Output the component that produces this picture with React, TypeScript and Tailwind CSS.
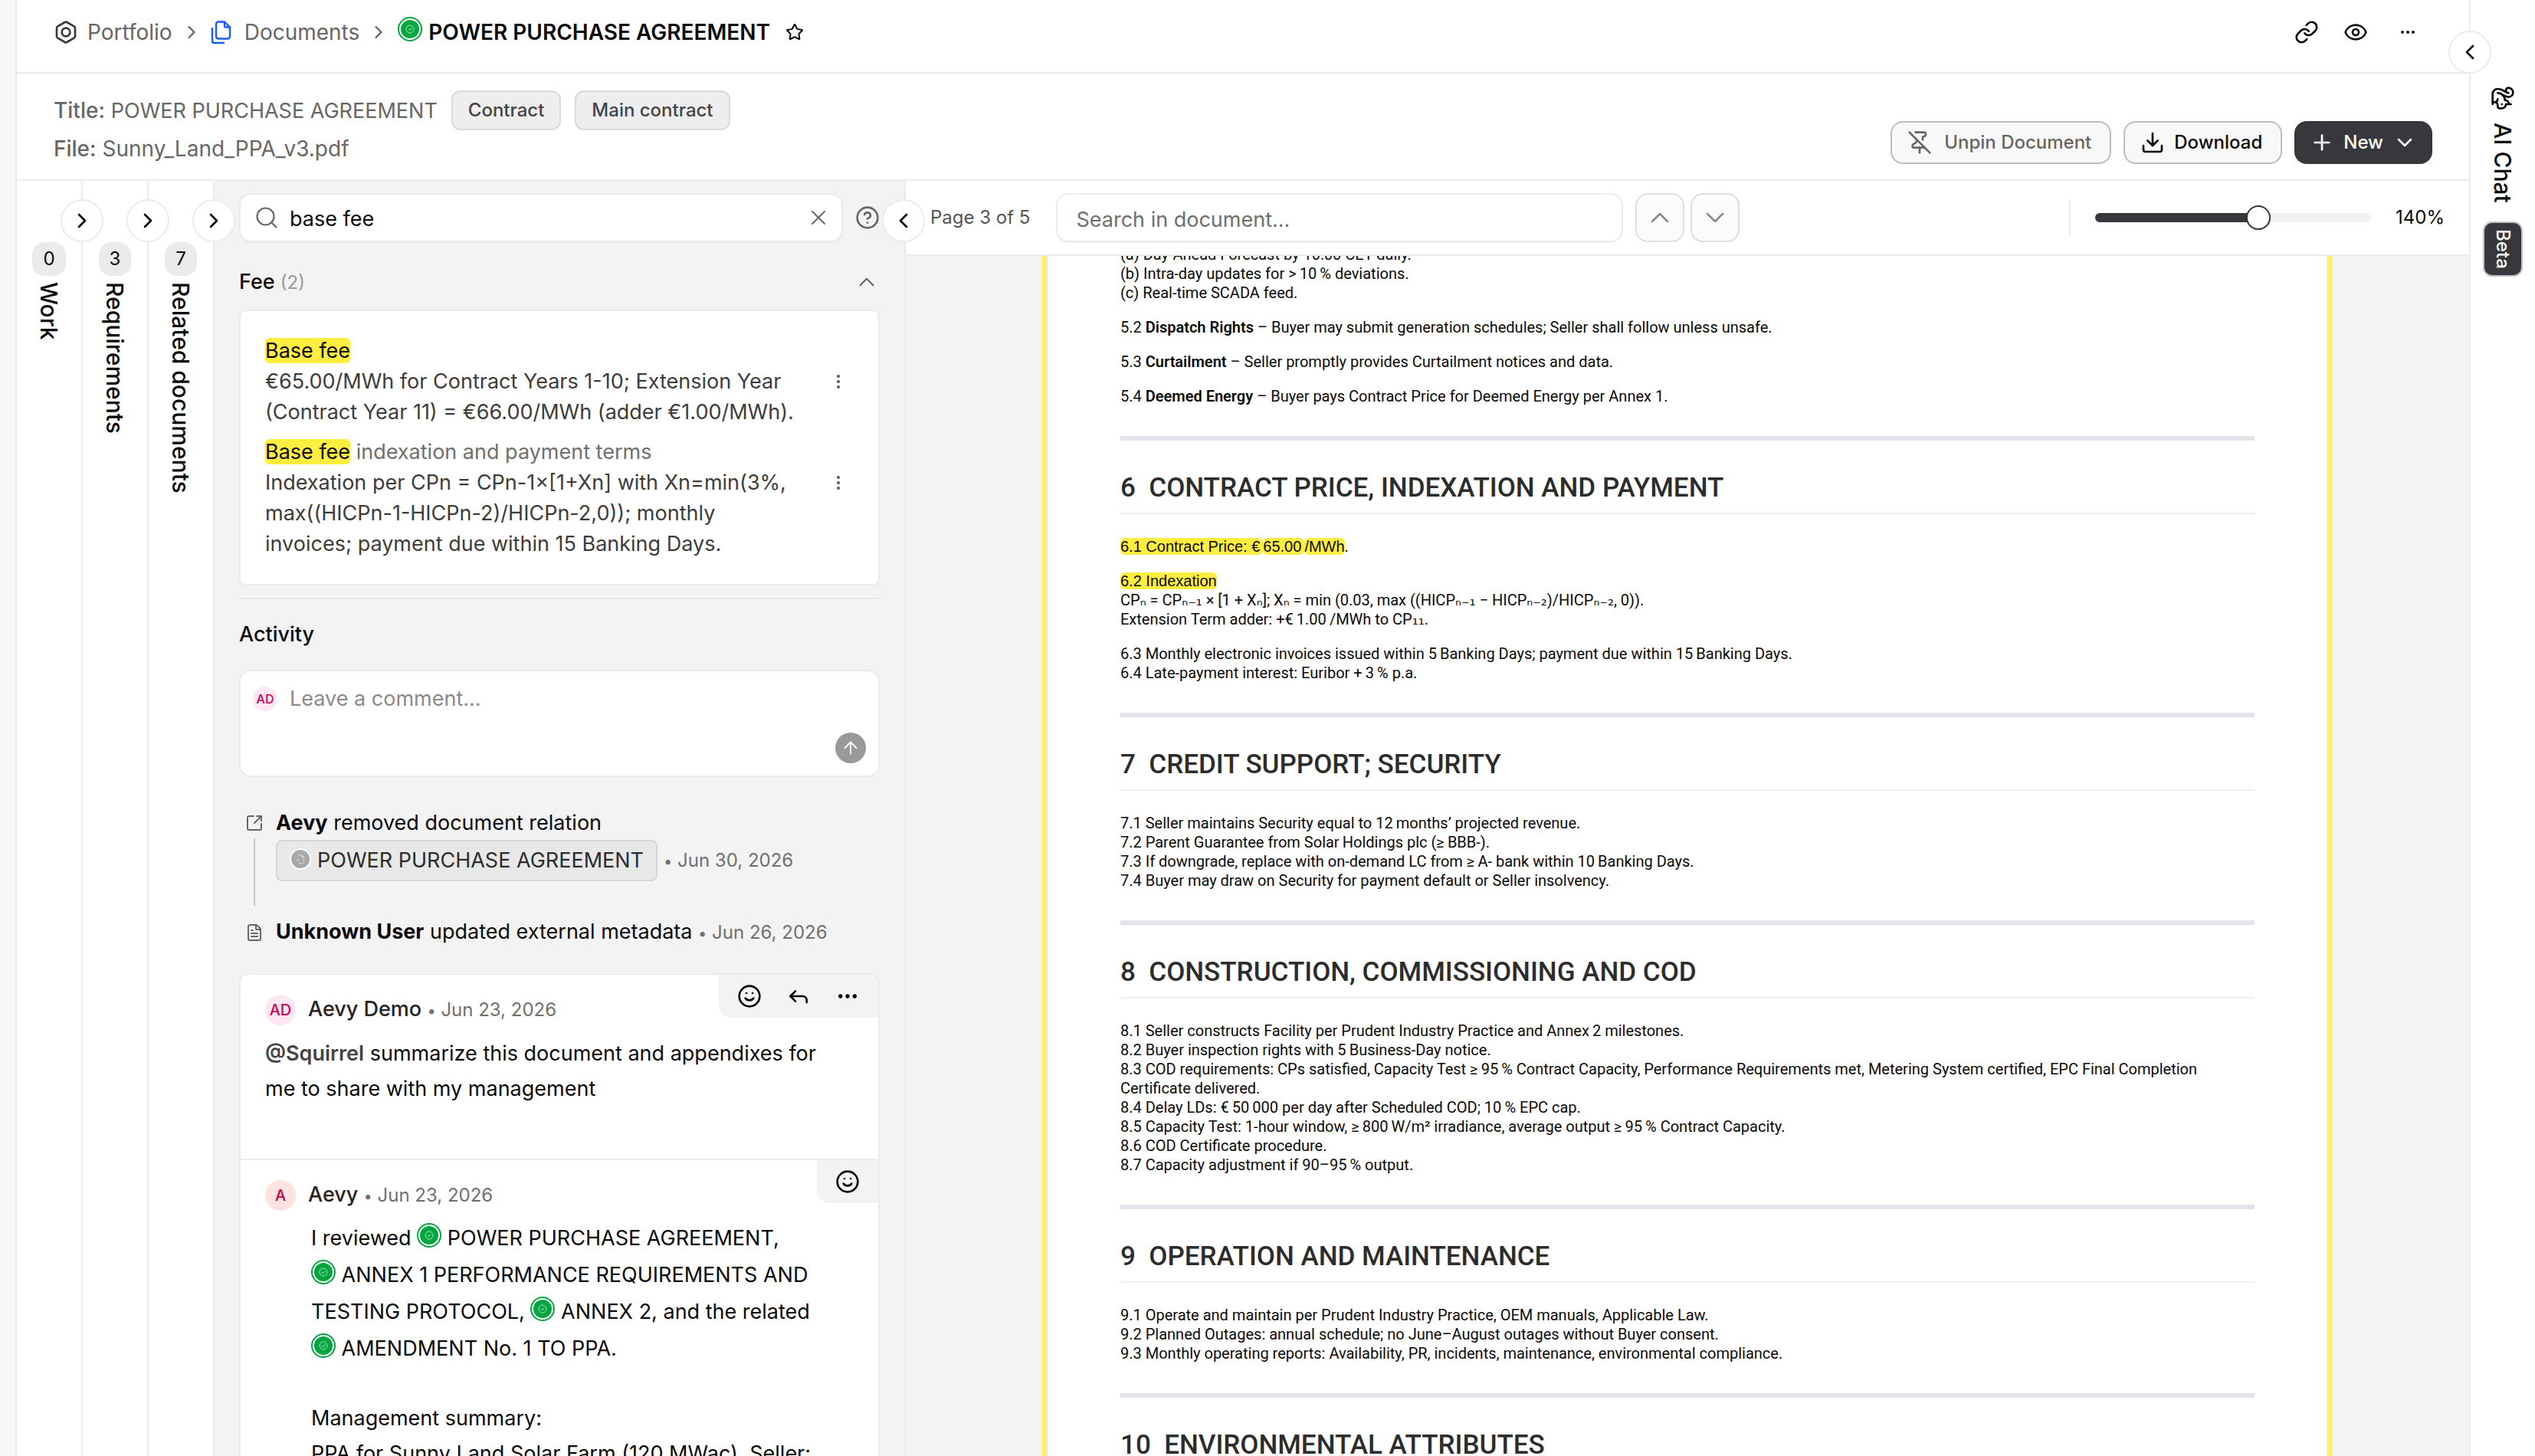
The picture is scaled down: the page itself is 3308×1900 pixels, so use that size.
import React from "react";
import {
  ArrowUp,
  Bolt,
  ChevronDown,
  ChevronLeft,
  ChevronRight,
  ChevronUp,
  CircleQuestionMark,
  Download,
  Ellipsis,
  EllipsisVertical,
  Eye,
  FileText,
  Link,
  PinOff,
  Plus,
  Reply,
  Smile,
  SquareArrowOutUpRight,
  Squirrel,
  Star,
  X,
} from "lucide-react";

const DocumentsIcon = () => (
  <svg width="28" height="32" viewBox="0 0 28 32" fill="none" stroke="#155dfc" strokeWidth="2.4" strokeLinecap="round" strokeLinejoin="round">
    <path d="M18 2.500H10a3 3 0 0 0-3 3v16a3 3 0 0 0 3 3h12a3 3 0 0 0 3-3V9.500l-7-7Z" />
    <path d="M18 3v4.500a2 2 0 0 0 2 2h4.500" />
    <path d="M2 11v16.500a2.500 2.500 0 0 0 2.500 2.500H17" />
  </svg>
);

const SearchIcon = () => (
  <svg width="32" height="32" viewBox="0 0 32 32" fill="none" stroke="#666" strokeWidth="2.2" strokeLinecap="round">
    <circle cx="14.500" cy="14.500" r="11" />
    <path d="m22.800 22.800 5.700 5.700" />
  </svg>
);

const ApprovedBadge = ({ className = "" }: { className?: string }) => (
  <svg width="32" height="32" viewBox="0 0 32 32" fill="none" className={`inline-block shrink-0 ${className}`}>
    <circle cx="16" cy="16" r="15" fill="#fff" stroke="#00a63e" strokeWidth="2" />
    <circle cx="16" cy="16" r="12" fill="#00a63e" />
    <circle cx="16" cy="16" r="5" stroke="#b9e6c9" strokeWidth="0.900" />
    <path d="m14 16.200 1.400 1.400 2.700-2.900" stroke="#e6f7ec" strokeWidth="1" />
  </svg>
);

const RemovedBadge = () => (
  <svg width="28" height="28" viewBox="0 0 28 28" fill="none" className="mb-1 shrink-0">
    <circle cx="14" cy="14" r="13" fill="#a8a8a8" stroke="#fff" strokeWidth="2" />
    <g stroke="#dcdcdc" strokeWidth="0.900">
      <path d="M10.500 11.500V9.500a1 1 0 0 1 1-1h4l3 3v7a1 1 0 0 1-1 1h-6" />
      <path d="M15.500 8.500v3h3M9.500 14l3 3M12.500 14l-3 3" />
    </g>
  </svg>
);

const CircleButton = ({ label, children, className = "" }: { label: string; children: React.ReactNode; className?: string }) => (
  <button
    aria-label={label}
    className={`absolute z-10 flex h-14 w-14 items-center justify-center rounded-full border-2 border-[#ebebeb] bg-white ${className}`}
  >
    {children}
  </button>
);

const DateStamp = ({ children }: { children: React.ReactNode }) => (
  <span className="text-[24px] font-normal text-[#707070]">
    <span className="text-[20px]">•</span> {children}
  </span>
);

const rails = [
  { count: 0, label: "Work" },
  { count: 3, label: "Requirements" },
  { count: 7, label: "Related documents" },
];

const Header = () => (
  <header>
    <div className="flex h-24 items-start justify-between border-b-2 border-[#ebebeb] pt-5 pr-[68px] pl-12">
      <nav className="flex h-11 items-center text-[28px] text-[#666]">
        <a href="#portfolio" className="flex items-center gap-3">
          <Bolt size={32} className="text-[#37373c]" />
          Portfolio
        </a>
        <ChevronRight size={28} className="mx-[11px]" />
        <a href="#documents" className="flex items-center gap-4">
          <DocumentsIcon />
          Documents
        </a>
        <ChevronRight size={28} className="mx-[11px]" />
        <h1 className="flex items-center gap-2 font-semibold text-[#0a0a0a]">
          <ApprovedBadge className="mb-2" />
          POWER PURCHASE AGREEMENT
        </h1>
        <button aria-label="Favourite" className="ml-5 text-[#0a0a0a]">
          <Star size={24} />
        </button>
      </nav>
      <div className="flex h-11 items-center gap-8 text-[#0a0a0a]">
        <button aria-label="Copy link">
          <Link size={32} />
        </button>
        <button aria-label="Watch">
          <Eye size={32} />
        </button>
        <button aria-label="More" className="pl-2">
          <Ellipsis size={24} />
        </button>
      </div>
    </div>
    <div className="flex items-center justify-between border-b-2 border-[#ebebeb] px-12 pt-5 pb-[18px]">
      <div className="text-[28px] text-[#666]">
        <div className="flex h-14 items-center gap-[18px]">
          <p>
            <span className="font-medium">Title:</span> <span className="text-[27px]">POWER PURCHASE AGREEMENT</span>
          </p>
          <span className="flex h-[52px] items-center rounded-xl border-2 border-[#dadada] bg-[#eee] px-5 text-[24px] font-medium text-[#444]">
            Contract
          </span>
          <span className="flex h-[52px] items-center rounded-xl border-2 border-[#dadada] bg-[#eee] px-5 text-[24px] font-medium text-[#444]">
            Main contract
          </span>
        </div>
        <p className="h-11 leading-[44px]">
          <span className="font-medium">File:</span> Sunny_Land_PPA_v3.pdf
        </p>
      </div>
      <div className="flex gap-4 self-end pb-[2px] text-[24px] font-medium">
        <button className="flex h-14 items-center gap-4 rounded-2xl border-2 border-[#bdbdbd] bg-[#f8f8f8] pr-6 pl-5 text-[#666]">
          <PinOff size={32} />
          Unpin Document
        </button>
        <button className="flex h-14 items-center gap-3 rounded-2xl border-2 border-[#bdbdbd] bg-[#f8f8f8] pr-6 pl-5 text-[#0a0a0a]">
          <Download size={32} />
          Download
        </button>
        <button className="flex h-14 items-center gap-3 rounded-2xl bg-[#37373c] px-5 text-white">
          <Plus size={32} />
          New
          <ChevronDown size={32} />
        </button>
      </div>
    </div>
  </header>
);

const Rail = ({ count, label }: { count: number; label: string }) => (
  <div className="relative flex w-[86px] shrink-0 flex-col items-center border-r-2 border-[#ebebeb] pt-20">
    <CircleButton label={`Open ${label}`} className="top-6 -right-[29px]">
      <ChevronRight size={32} />
    </CircleButton>
    <span className="flex h-11 items-center rounded-2xl bg-[#ebebeb] px-3.5 text-[24px]">{count}</span>
    <span className="mt-2 text-[30px] leading-10 font-medium [writing-mode:vertical-rl]">{label}</span>
  </div>
);

const Mark = ({ children }: { children: React.ReactNode }) => (
  <mark className="rounded-md bg-[#ffee3f] text-[#0a0a0a]">{children}</mark>
);

const FeeItem = ({ title, children }: { title: React.ReactNode; children: React.ReactNode }) => (
  <div className="flex items-start justify-between">
    <div className="w-[700px]">
      <p className="text-[#6f6f6f]">{title}</p>
      <p className="text-[#3c3c3c]">{children}</p>
    </div>
    <button aria-label="Options" className="mt-10 mr-2 flex h-10 items-center text-[#555]">
      <EllipsisVertical size={24} />
    </button>
  </div>
);

const Comment = ({
  initials,
  avatar,
  name,
  actions,
  children,
}: {
  initials: string;
  avatar: string;
  name: string;
  actions: React.ReactNode;
  children: React.ReactNode;
}) => (
  <article className="relative px-8 pt-6 pb-[68px]">
    <div className="absolute top-0 right-0 flex h-14 items-center gap-8 rounded-bl-2xl bg-[#f3f3f3] px-6">{actions}</div>
    <div className="flex items-center gap-4">
      <span className={`flex h-10 w-10 items-center justify-center rounded-full text-[20px] font-medium ${avatar}`}>{initials}</span>
      <p className="leading-[42px] font-medium text-[#222]">
        {name} <DateStamp>Jun 23, 2026</DateStamp>
      </p>
    </div>
    {children}
  </article>
);

const Panel = () => (
  <aside className="relative flex w-[902px] shrink-0 flex-col border-r-2 border-[#ebebeb] bg-[#f3f3f3] px-8 pt-4 text-[27px]">
    <CircleButton label="Collapse panel" className="top-6 -right-[27px]">
      <ChevronLeft size={32} />
    </CircleButton>
    <div className="flex items-center gap-4">
      <label className="flex h-16 flex-1 items-center gap-3.5 rounded-2xl border-2 border-[#ebebeb] bg-white pr-3.5 pl-[18px] shadow-xs">
        <SearchIcon />
        <input aria-label="Search attributes" defaultValue="base fee" className="min-w-0 flex-1 pt-1 outline-none" />
        <button aria-label="Clear" className="text-[#666]">
          <X size={32} strokeWidth={1.500} />
        </button>
      </label>
      <button aria-label="Help" className="text-[#666]">
        <CircleQuestionMark size={32} />
      </button>
    </div>

    <div className="mt-8 flex h-10 items-center justify-between">
      <h2 className="font-medium">
        Fee <span className="text-[24px] font-normal text-[#999]">(2)</span>
      </h2>
      <button aria-label="Collapse" className="text-[#666]">
        <ChevronUp size={34} strokeWidth={1.500} />
      </button>
    </div>
    <section className="mt-4 flex flex-col gap-3 rounded-lg border-2 border-[#ebebeb] bg-white p-8 leading-10">
      <FeeItem title={<Mark>Base fee</Mark>}>
        €65.00/MWh for Contract Years 1-10; Extension Year (Contract Year 11) = €66.00/MWh (adder €1.00/MWh).
      </FeeItem>
      <FeeItem
        title={
          <>
            <Mark>Base fee</Mark> indexation and payment terms
          </>
        }
      >
        Indexation per CPn = CPn-1×[1+Xn] with Xn=min(3%, max((HICPn-1-HICPn-2)/HICPn-2,0)); monthly invoices; payment due within 15
        Banking Days.
      </FeeItem>
    </section>

    <h2 className="mt-4 border-t-2 border-[#e8e8e8] pt-6 leading-[44px] font-medium">Activity</h2>
    <form className="mt-6 flex h-[140px] items-start gap-4 rounded-2xl border-2 border-[#ebebeb] bg-white p-4">
      <span className="mt-1 flex h-8 w-8 items-center justify-center rounded-full bg-[#fce7f3] text-[16px] font-medium text-[#c6005c]">
        AD
      </span>
      <textarea aria-label="Comment" placeholder="Leave a comment..." className="h-10 flex-1 resize-none leading-10 outline-none placeholder:text-[#8a8a8a]" />
      <button type="button" aria-label="Send" className="flex h-10 w-10 items-center justify-center self-end rounded-full bg-[#99999b] text-white">
        <ArrowUp size={26} strokeWidth={1.800} />
      </button>
    </form>

    <div className="mt-10 flex gap-2 px-2">
      <div className="flex w-6 flex-col items-center pt-2 text-[#666]">
        <SquareArrowOutUpRight size={24} />
        <span className="mt-2 w-[2px] flex-1 bg-[#c6c6c6]" />
      </div>
      <div className="pb-8 pl-2">
        <p className="leading-10">
          <b>Aevy</b> removed document relation
        </p>
        <div className="mt-[2px] flex items-center gap-2">
          <span className="flex h-[54px] items-center gap-2 rounded-lg border-2 border-[#d6d6d6] bg-[#e8e8e8] px-4 text-[#2c2c2c]">
            <RemovedBadge />
            POWER PURCHASE AGREEMENT
          </span>
          <DateStamp>Jun 30, 2026</DateStamp>
        </div>
      </div>
    </div>
    <div className="mt-3.5 flex items-center gap-4 px-2">
      <FileText size={24} className="text-[#666]" />
      <p className="leading-10">
        <b>Unknown User</b> updated external metadata <DateStamp>Jun 26, 2026</DateStamp>
      </p>
    </div>

    <section className="mt-8 min-h-0 flex-1 overflow-hidden rounded-t-xl border-2 border-b-0 border-[#ebebeb] bg-white">
      <Comment
        initials="AD"
        avatar="bg-[#fce7f3] text-[#c6005c]"
        name="Aevy Demo"
        actions={
          <>
            <button aria-label="React">
              <Smile size={32} />
            </button>
            <button aria-label="Reply">
              <Reply size={32} />
            </button>
            <button aria-label="More">
              <Ellipsis size={32} />
            </button>
          </>
        }
      >
        <p className="mt-3 pr-6 leading-[46px]">
          <span className="font-semibold text-[#444]">@Squirrel</span> summarize this document and appendixes for me to share with my
          management
        </p>
      </Comment>
      <div className="border-t-2 border-[#ebebeb]">
        <Comment
          initials="A"
          avatar="bg-[#ffe2e2] text-[#c70036]"
          name="Aevy"
          actions={
            <button aria-label="React">
              <Smile size={32} />
            </button>
          }
        >
          <p className="mt-2.5 pl-[60px] leading-[48px]">
            I reviewed <ApprovedBadge className="-mt-3" /> POWER PURCHASE AGREEMENT,
            <br />
            <ApprovedBadge className="-mt-3" /> ANNEX 1 PERFORMANCE REQUIREMENTS AND TESTING PROTOCOL,{" "}
            <ApprovedBadge className="-mt-3" /> ANNEX 2, and the related
            <br />
            <ApprovedBadge className="-mt-3" /> AMENDMENT No. 1 TO PPA.
          </p>
          <p className="mt-11 pl-[60px] leading-[46px]">
            Management summary:
            <br />
            PPA for Sunny Land Solar Farm (120 MWac). Seller:
          </p>
        </Comment>
      </div>
    </section>
  </aside>
);

const ViewerToolbar = () => (
  <div className="flex h-[98px] shrink-0 items-center border-b-2 border-[#ebebeb] bg-white px-8 text-[24px]">
    <span className="text-[#555]">Page 3 of 5</span>
    <input
      aria-label="Search in document"
      placeholder="Search in document..."
      className="ml-[34px] h-16 w-[740px] rounded-2xl border-2 border-[#ebebeb] px-6 pt-1 text-[27px] shadow-xs outline-none placeholder:text-[#6f6f6f]"
    />
    <button aria-label="Previous match" className="ml-4 flex h-16 w-16 items-center justify-center rounded-2xl border-2 border-[#dedede] bg-[#fbfbfb] text-[#888]">
      <ChevronUp size={40} strokeWidth={1.500} />
    </button>
    <button aria-label="Next match" className="ml-2 flex h-16 w-16 items-center justify-center rounded-2xl border-2 border-[#dedede] bg-[#fbfbfb] text-[#888]">
      <ChevronDown size={40} strokeWidth={1.500} />
    </button>
    <div className="ml-auto flex h-12 items-center gap-8 border-l-2 border-[#ebebeb] pl-8">
      <input
        type="range"
        aria-label="Zoom"
        min={50}
        max={200}
        defaultValue={140}
        className="h-3 w-[360px] appearance-none rounded-full bg-[linear-gradient(to_right,#37373c_60%,#f2f2f2_60%)] [&::-webkit-slider-thumb]:h-8 [&::-webkit-slider-thumb]:w-8 [&::-webkit-slider-thumb]:appearance-none [&::-webkit-slider-thumb]:rounded-full [&::-webkit-slider-thumb]:border-2 [&::-webkit-slider-thumb]:border-[#37373c] [&::-webkit-slider-thumb]:bg-white [&::-webkit-slider-thumb]:shadow-sm"
      />
      <span>140%</span>
    </div>
  </div>
);

const Hit = ({ children }: { children: React.ReactNode }) => (
  <mark className="rounded-md bg-[#ffee3f] font-['Liberation_Sans',sans-serif] text-[#0a0a0a]">{children}</mark>
);

const Sub = ({ children }: { children: React.ReactNode }) => (
  <span className="font-['DejaVu_Sans',sans-serif] leading-none">{children}</span>
);

const Clause = ({ title, children }: { title: string; children: React.ReactNode }) => (
  <section className="border-t-6 border-[#e1e4e8] pt-[42px]">
    <h2 className="border-b-2 border-[#eee] pb-3 text-[35px] leading-10 font-medium whitespace-pre text-[#2c2c2c]">{title}</h2>
    <div className="flex flex-col gap-5 pt-[30px] pb-[39px]">{children}</div>
  </section>
);

const Lines = ({ items }: { items: string[] }) => (
  <div>
    {items.map((item) => (
      <p key={item}>{item}</p>
    ))}
  </div>
);

const Page = () => (
  <div className="mx-auto w-[1684px] border-x-6 border-[#fff15f] font-[Roboto,sans-serif] text-[20px] leading-[25px] text-[#0a0a0a]">
    <div className="border-x-2 border-[#ebebeb] bg-white px-[94px]">
      <div className="-mt-3.5 flex flex-col gap-5 pb-[39px]">
        <Lines
          items={[
            "(a) Day-Ahead Forecast by 10:00 CET daily.",
            "(b) Intra-day updates for >\u200910\u2009% deviations.",
            "(c) Real-time SCADA feed.",
          ]}
        />
        <p>
          5.2 <b className="font-semibold">Dispatch Rights</b> – Buyer may submit generation schedules; Seller shall follow unless unsafe.
        </p>
        <p>
          5.3 <b className="font-semibold">Curtailment</b> – Seller promptly provides Curtailment notices and data.
        </p>
        <p>
          5.4 <b className="font-semibold">Deemed Energy</b> – Buyer pays Contract Price for Deemed Energy per Annex 1.
        </p>
      </div>
      <Clause title="6  CONTRACT PRICE, INDEXATION AND PAYMENT">
        <p>
          <Hit>6.1 Contract Price: €&#8201;</Hit>
          <Hit>65.00&#8201;</Hit>
          <Hit>/MWh</Hit>.
        </p>
        <div>
          <p>
            <Hit>6.2 Indexation</Hit>
          </p>
          <p>
            CP<Sub>ₙ</Sub> = CP<Sub>ₙ₋₁</Sub> × [1 + X<Sub>ₙ</Sub>]; X<Sub>ₙ</Sub> = min (0.03, max ((HICP<Sub>ₙ₋₁</Sub> − HICP
            <Sub>ₙ₋₂</Sub>)/HICP<Sub>ₙ₋₂</Sub>, 0)).
          </p>
          <p>
            Extension Term adder: +€&#8201;1.00&#8201;/MWh to CP<Sub>₁₁</Sub>.
          </p>
        </div>
        <Lines
          items={[
            "6.3 Monthly electronic invoices issued within 5\u2009Banking Days; payment due within 15\u2009Banking Days.",
            "6.4 Late-payment interest: Euribor +\u20093\u2009% p.a.",
          ]}
        />
      </Clause>
      <Clause title="7  CREDIT SUPPORT; SECURITY">
        <Lines
          items={[
            "7.1 Seller maintains Security equal to 12\u2009months’ projected revenue.",
            "7.2 Parent Guarantee from Solar\u2009Holdings plc (≥\u2009BBB-).",
            "7.3 If downgrade, replace with on-demand LC from ≥\u2009A- bank within 10\u2009Banking Days.",
            "7.4 Buyer may draw on Security for payment default or Seller insolvency.",
          ]}
        />
      </Clause>
      <Clause title="8  CONSTRUCTION, COMMISSIONING AND COD">
        <Lines
          items={[
            "8.1 Seller constructs Facility per Prudent Industry Practice and Annex\u20092 milestones.",
            "8.2 Buyer inspection rights with 5\u2009Business-Day notice.",
            "8.3 COD requirements: CPs satisfied, Capacity Test ≥\u200995\u2009% Contract Capacity, Performance Requirements met, Metering System certified, EPC Final Completion Certificate delivered.",
            "8.4 Delay LDs: €\u200950\u2009000 per day after Scheduled COD; 10\u2009% EPC cap.",
            "8.5 Capacity Test: 1-hour window, ≥\u2009800\u2009W/m² irradiance, average output ≥\u200995\u2009% Contract Capacity.",
            "8.6 COD Certificate procedure.",
            "8.7 Capacity adjustment if 90–95\u2009% output.",
          ]}
        />
      </Clause>
      <Clause title="9  OPERATION AND MAINTENANCE">
        <Lines
          items={[
            "9.1 Operate and maintain per Prudent Industry Practice, OEM manuals, Applicable Law.",
            "9.2 Planned Outages: annual schedule; no June–August outages without Buyer consent.",
            "9.3 Monthly operating reports: Availability, PR, incidents, maintenance, environmental compliance.",
          ]}
        />
      </Clause>
      <Clause title="10  ENVIRONMENTAL ATTRIBUTES">{null}</Clause>
    </div>
  </div>
);

const ChatRail = () => (
  <aside className="relative flex w-[86px] shrink-0 flex-col items-center border-l-2 border-[#ebebeb] pt-28">
    <CircleButton label="Open AI chat" className="top-10 -left-[29px]">
      <ChevronLeft size={32} />
    </CircleButton>
    <Squirrel size={32} className="rotate-90" />
    <span className="mt-4 text-[30px] leading-10 font-medium [writing-mode:vertical-rl]">AI Chat</span>
    <span className="mt-6 flex w-[52px] items-center rounded-xl border-2 border-[#c0c0c8] bg-[#37373c] px-2 py-2 text-[24px] font-medium text-white [writing-mode:vertical-rl]">
      Beta
    </span>
  </aside>
);

const App = () => {
  return (
    <div className="flex h-screen overflow-hidden bg-white font-[Inter,sans-serif] text-[#0a0a0a]">
      <div className="w-[22px] shrink-0 border-r-2 border-[#ebebeb] bg-[#f7f7f7]" />
      <main className="flex min-w-0 flex-1 flex-col">
        <Header />
        <div className="flex min-h-0 flex-1">
          {rails.map((rail) => (
            <Rail key={rail.label} {...rail} />
          ))}
          <Panel />
          <div className="flex min-w-0 flex-1 flex-col bg-[#f3f3f3]">
            <ViewerToolbar />
            <div className="min-h-0 flex-1 overflow-hidden">
              <Page />
            </div>
          </div>
        </div>
      </main>
      <ChatRail />
    </div>
  );
};

export default App;
